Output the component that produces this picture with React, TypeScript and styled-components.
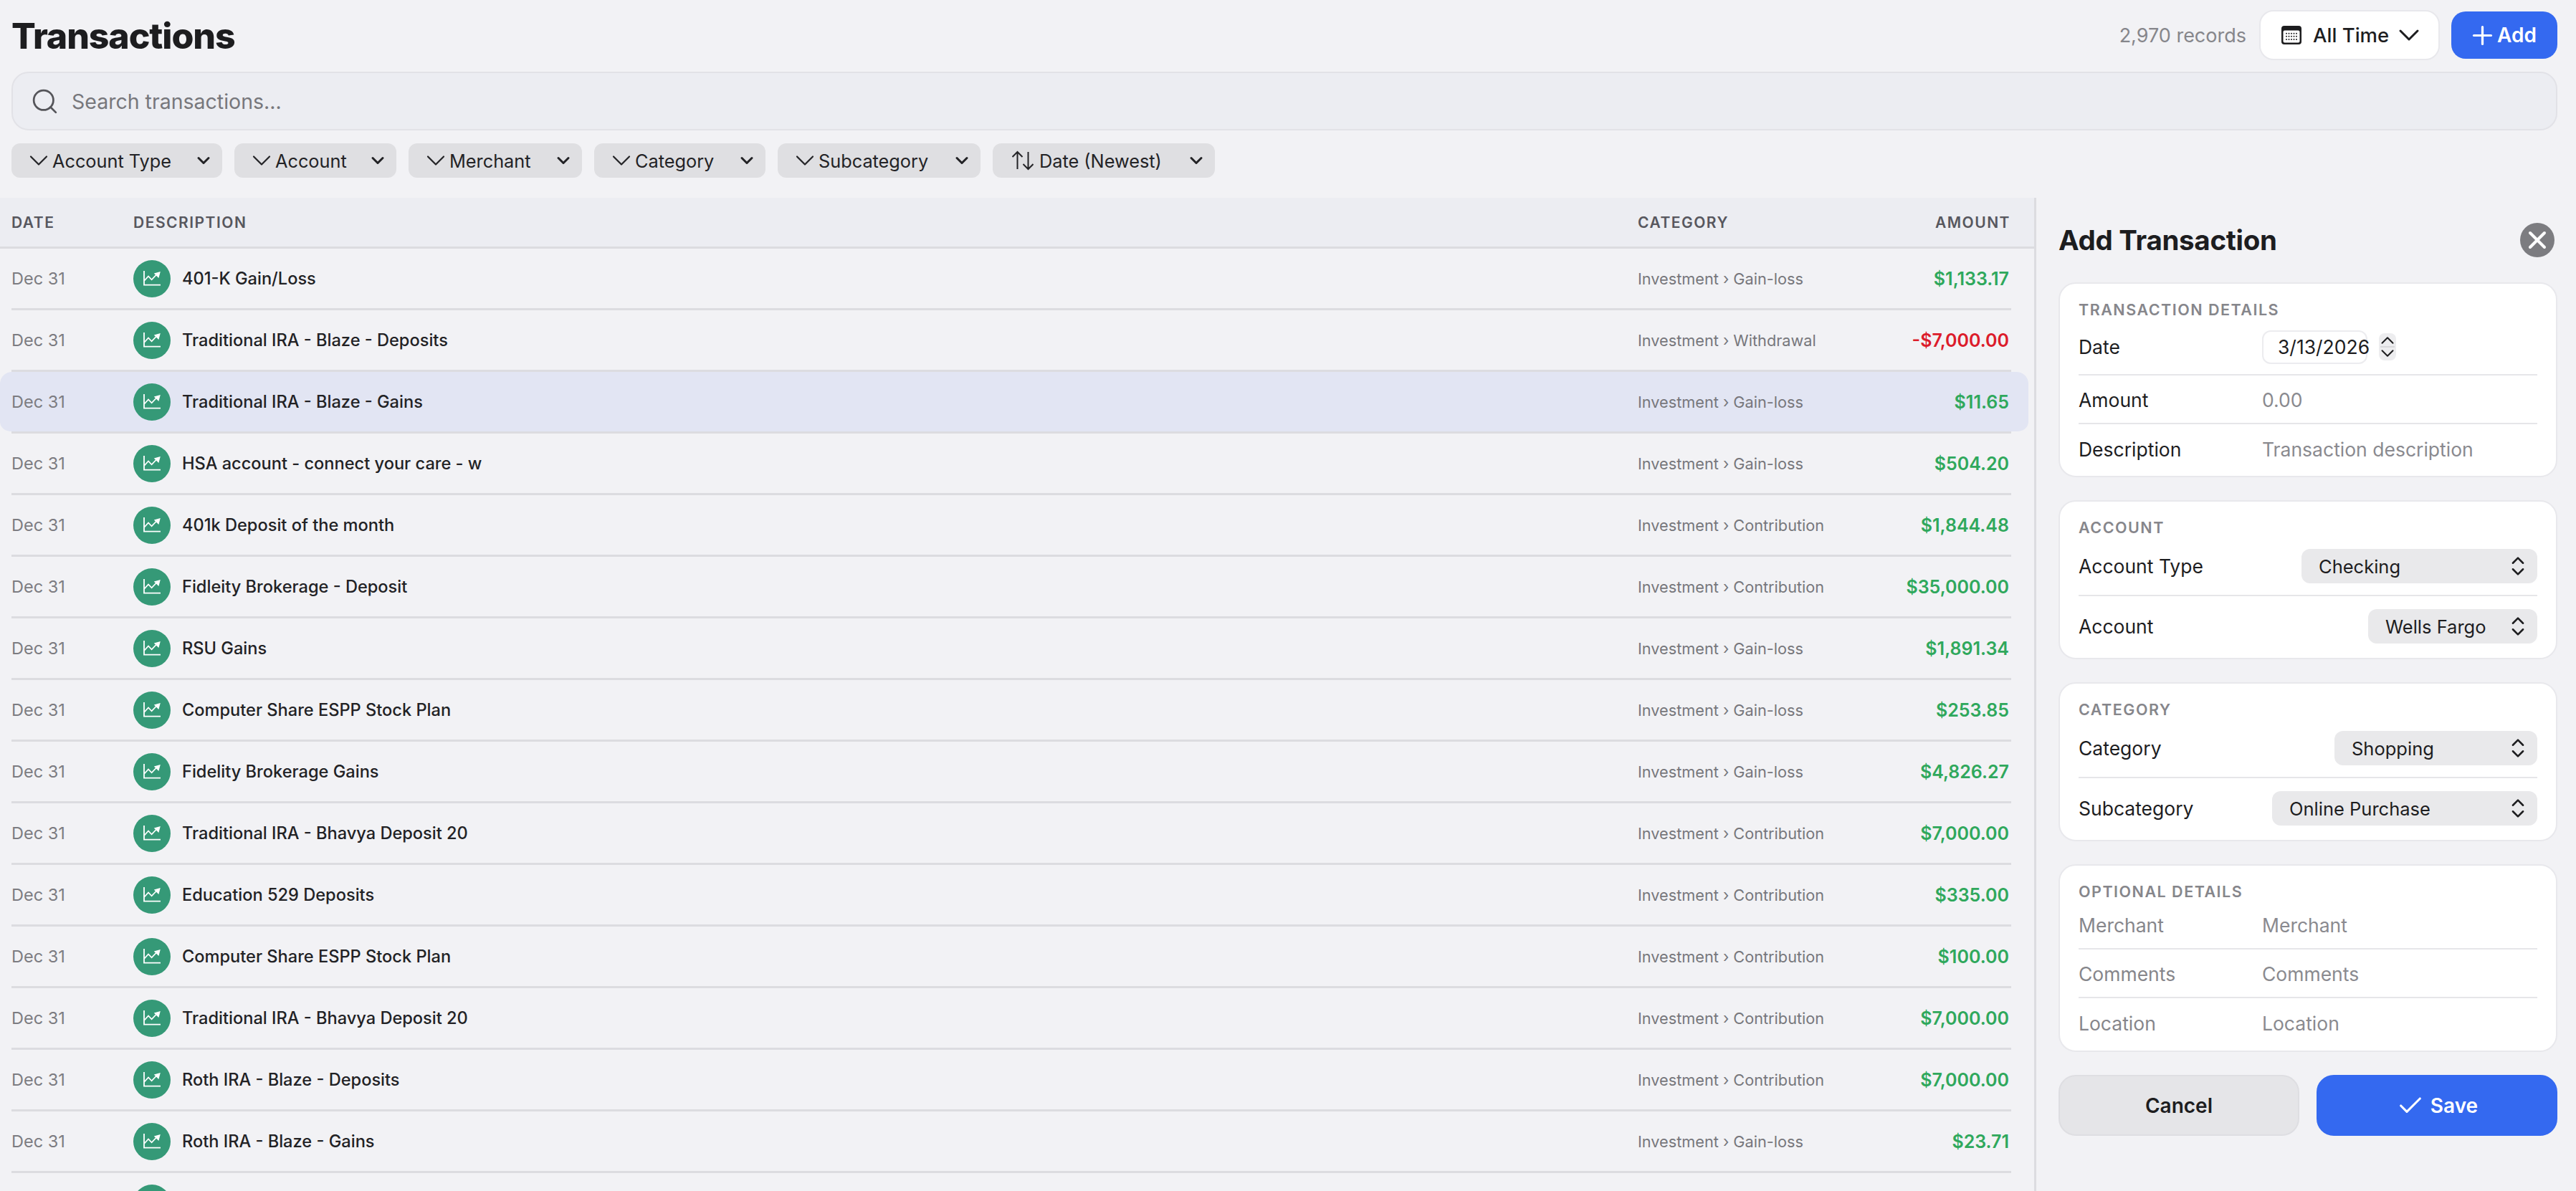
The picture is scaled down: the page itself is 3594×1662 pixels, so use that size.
import styled, { createGlobalStyle } from "styled-components";
import { ChevronDown, ChevronUp, ChevronsUpDown, Plus, Search, X, Check } from "lucide-react";

const GlobalStyle = createGlobalStyle`
    html, body {
        margin: 0;
        padding: 0;
        background: #f2f2f5;
        font-family: Inter, "Liberation Sans", sans-serif;
        color: #1d1d1f;
    }
    * {
        box-sizing: border-box;
    }
`

const Page = styled.div`
    height: 1662px;
    display: flex;
    flex-direction: column;
    overflow: hidden;
`
const TopBar = styled.div`
    height: 100px;
    padding: 14px 26px 0 16px;
    display: flex;
    justify-content: space-between;
    align-items: flex-start;
`
const Title = styled.h1`
    margin: 6px 0 0;
    font-size: 50px;
    line-height: 60px;
    font-weight: 800;
    letter-spacing: -1.1px;
`
const TopActions = styled.div`
    display: flex;
    align-items: center;
    height: 70px;
`
const Records = styled.span`
    font-size: 27px;
    color: #86868b;
    margin-right: 18px;
`
const RangeButton = styled.div`
    width: 252px;
    height: 70px;
    background: #fff;
    border: 2px solid #e8e8ec;
    border-radius: 20px;
    display: flex;
    align-items: center;
    padding-left: 29px;
    font-size: 27.5px;
    font-weight: 500;
    margin-right: 16px;
`
const RangeLabel = styled.span`
    margin: 0 4px 0 16px;
`
const AddButton = styled.div`
    width: 148px;
    height: 66px;
    background: #3469f0;
    color: #fff;
    border-radius: 20px;
    display: flex;
    align-items: center;
    padding-left: 23px;
    font-size: 28px;
    font-weight: 600;
`
const SearchWrap = styled.div`
    margin: 0 26px 0 16px;
    height: 82px;
    background: #ecedf2;
    border: 2px solid #e2e2e7;
    border-radius: 24px;
    display: flex;
    align-items: center;
    padding: 0 24px;
    gap: 17px;
    font-size: 28.5px;
    color: #77777c;
`
const Filters = styled.div`
    display: flex;
    gap: 17px;
    padding: 18px 16px 28px;
    height: 94px;
`
const Filter = styled.div<{ $width: number }>`
    width: ${(p) => p.$width}px;
    height: 48px;
    padding: 0 12px 0 16px;
    background: #dfdfe2;
    border-radius: 12px;
    display: flex;
    align-items: center;
    font-size: 25.3px;
    font-weight: 400;
    color: #232326;
`
const FilterLabel = styled.span`
    flex: 1;
    margin-left: -3px;
    white-space: nowrap;
`
const SortLabel = styled(FilterLabel)`
    margin-left: 8px;
`
const SortGlyph = styled.svg`
    margin-left: 11px;
`
const Body = styled.div`
    flex: 1;
    min-height: 0;
    display: flex;
`
const TablePane = styled.div`
    flex: 1;
    min-width: 0;
`
const HeaderRow = styled.div`
    height: 71px;
    background: #ecedf2;
    border-bottom: 3px solid #dcdce0;
    display: grid;
    grid-template-columns: 170px 1fr 308px 212px;
    align-items: center;
    padding: 0 33px 0 16px;
    font-size: 21px;
    font-weight: 600;
    letter-spacing: 1.5px;
    color: #57575e;
`
const RightCell = styled.div`
    text-align: right;
`
const Row = styled.div<{ $selected?: boolean }>`
    position: relative;
    height: 86px;
    margin-right: 8px;
    padding: 0 27px 0 16px;
    display: grid;
    grid-template-columns: 170px 1fr 306px 212px;
    align-items: center;
    border-bottom: 3px solid transparent;
    background-clip: padding-box;
    background-color: ${(p) => (p.$selected ? "#e2e5f3" : "transparent")};
    border-radius: ${(p) => (p.$selected ? "16px" : "0")};
    &::after {
        content: "";
        position: absolute;
        left: 16px;
        right: 24px;
        bottom: -3px;
        height: 3px;
        background: #dcdce0;
    }
`
const DateCell = styled.div`
    font-size: 23.5px;
    color: #7c7c81;
`
const DescCell = styled.div`
    display: flex;
    align-items: center;
    gap: 16px;
    font-size: 23.6px;
    font-weight: 500;
    color: #222225;
`
const IconCircle = styled.div`
    width: 52px;
    height: 52px;
    border-radius: 50%;
    background: #359977;
    display: flex;
    align-items: center;
    justify-content: center;
`
const CatCell = styled.div`
    font-size: 21.7px;
    color: #77777c;
`
const AmountCell = styled(RightCell)<{ $negative?: boolean }>`
    font-size: 25px;
    font-weight: 600;
    color: ${(p) => (p.$negative ? "#dc1c2b" : "#2fa85c")};
`
const Sidebar = styled.div`
    width: 756px;
    border-left: 3px solid #dcdce0;
    padding: 0 26px 0 31px;
    display: flex;
    flex-direction: column;
`
const SideHead = styled.div`
    height: 118px;
    display: flex;
    align-items: center;
    justify-content: space-between;
    padding-right: 4px;
`
const SideTitle = styled.h2`
    margin: 0;
    font-size: 38.5px;
    font-weight: 700;
    letter-spacing: -0.3px;
`
const CloseButton = styled.div`
    width: 48px;
    height: 48px;
    border-radius: 50%;
    background: #7c7c80;
    display: flex;
    align-items: center;
    justify-content: center;
`
const Card = styled.div<{ $height: number }>`
    height: ${(p) => p.$height}px;
    margin-bottom: 32px;
    background: #fff;
    border: 2px solid #e8e8ec;
    border-radius: 24px;
    padding: 24px 26px 0;
`
const SectionLabel = styled.div`
    font-size: 21.5px;
    line-height: 24px;
    font-weight: 600;
    letter-spacing: 1.5px;
    color: #86868b;
`
const FieldRow = styled.div<{ $height: number; $last?: boolean }>`
    height: ${(p) => p.$height}px;
    padding-top: 2px;
    display: flex;
    align-items: center;
    border-bottom: ${(p) => (p.$last ? "none" : "2px solid #e6e6e9")};
    font-size: 26.5px;
`
const FieldLabel = styled.div<{ $muted?: boolean }>`
    width: 256px;
    color: ${(p) => (p.$muted ? "#86868b" : "#1d1d1f")};
`
const FieldValue = styled.div`
    color: #8a8a8f;
`
const DateBox = styled.div`
    width: 147px;
    height: 47px;
    background: #fff;
    border: 2px solid #ececef;
    border-radius: 12px;
    padding-left: 20px;
    display: flex;
    align-items: center;
    white-space: nowrap;
`
const Stepper = styled.div`
    position: relative;
    width: 24px;
    height: 38px;
    margin-left: 16px;
    background: #ededef;
    border-radius: 8px;
    display: flex;
    flex-direction: column;
    align-items: center;
    justify-content: space-between;
    padding: 1px 0;
    &::after {
        content: "";
        position: absolute;
        left: 2px;
        right: 2px;
        top: 18px;
        height: 2px;
        background: #d9d9dc;
    }
`
const StepUp = styled(ChevronUp)`
    margin: -6px -4px -6px;
    flex: none;
`
const StepDown = styled(ChevronDown)`
    margin: -6px -4px -6px;
    flex: none;
`
const SelectBox = styled.div<{ $width: number }>`
    width: ${(p) => p.$width}px;
    height: 48px;
    margin-left: auto;
    background: #e9e9eb;
    border-radius: 12px;
    display: flex;
    align-items: center;
    justify-content: space-between;
    padding: 0 10px 0 24px;
    font-size: 25.5px;
`
const Actions = styled.div`
    display: flex;
    gap: 24px;
`
const ActionButton = styled.div<{ $primary?: boolean }>`
    flex: 1;
    height: 85px;
    border-radius: 24px;
    display: flex;
    align-items: center;
    justify-content: center;
    gap: 8px;
    font-size: 28px;
    font-weight: 600;
    background: ${(p) => (p.$primary ? "#3469f0" : "#e5e5e8")};
    color: ${(p) => (p.$primary ? "#fff" : "#1d1d1f")};
    border: 2px solid ${(p) => (p.$primary ? "#3469f0" : "#dedee2")};
`

const rows = [
    ["401-K Gain/Loss", "Gain-loss", "$1,133.17"],
    ["Traditional IRA - Blaze - Deposits", "Withdrawal", "-$7,000.00"],
    ["Traditional IRA - Blaze - Gains", "Gain-loss", "$11.65"],
    ["HSA account - connect your care - w", "Gain-loss", "$504.20"],
    ["401k Deposit of the month", "Contribution", "$1,844.48"],
    ["Fidleity Brokerage - Deposit", "Contribution", "$35,000.00"],
    ["RSU Gains", "Gain-loss", "$1,891.34"],
    ["Computer Share ESPP Stock Plan", "Gain-loss", "$253.85"],
    ["Fidelity Brokerage Gains", "Gain-loss", "$4,826.27"],
    ["Traditional IRA - Bhavya Deposit 20", "Contribution", "$7,000.00"],
    ["Education 529 Deposits", "Contribution", "$335.00"],
    ["Computer Share ESPP Stock Plan", "Contribution", "$100.00"],
    ["Traditional IRA - Bhavya Deposit 20", "Contribution", "$7,000.00"],
    ["Roth IRA - Blaze - Deposits", "Contribution", "$7,000.00"],
    ["Roth IRA - Blaze - Gains", "Gain-loss", "$23.71"],
];

const filters: [string, number][] = [
    ["Account Type", 294],
    ["Account", 226],
    ["Merchant", 242],
    ["Category", 239],
    ["Subcategory", 283],
];

function ChartIcon() {
    return (
        <svg width="24" height="21" viewBox="0 0 24 21" fill="none" stroke="#fff" strokeWidth="1.8">
            <path d="M1 0v19.6h23" />
            <path d="M1.5 13.5 7 7.5l4.6 4.8 7.4-7.8" />
            <path d="M14.8 3.4 23.8 1l-2.4 9z" fill="#fff" stroke="none" />
        </svg>
    );
}

function CalendarIcon() {
    return (
        <svg width="28" height="26" viewBox="0 0 28 26">
            <rect width="28" height="26" rx="4" fill="#1d1d1f" />
            <rect x="2.5" y="6.5" width="23" height="17" rx="2" fill="#fff" />
            {[10.7, 14.7, 19].map((y) =>
                [7, 10.5, 14, 17.5, 21].map((x) => (
                    <circle key={x + "-" + y} cx={x} cy={y} r="1" fill="#1d1d1f" />
                ))
            )}
        </svg>
    );
}

function SortIcon() {
    return (
        <SortGlyph width="30" height="30" viewBox="0 0 30 30" fill="none" stroke="#232326" strokeWidth="2">
            <path d="M7.5 27V3M0.5 10l7-7 7 7" />
            <path d="M22.5 3v24M15.5 20l7 7 7-7" />
        </SortGlyph>
    );
}

export default function App() {
    return (
        <Page>
            <GlobalStyle />
            <TopBar>
                <Title>Transactions</Title>
                <TopActions>
                    <Records>2,970 records</Records>
                    <RangeButton>
                        <CalendarIcon />
                        <RangeLabel>All Time</RangeLabel>
                        <ChevronDown size={48} strokeWidth={1.5} />
                    </RangeButton>
                    <AddButton>
                        <Plus size={41} strokeWidth={1.9} />
                        Add
                    </AddButton>
                </TopActions>
            </TopBar>
            <SearchWrap>
                <Search size={41} strokeWidth={1.6} color="#55555a" />
                Search transactions...
            </SearchWrap>
            <Filters>
                {filters.map(([f, w]) => (
                    <Filter key={f} $width={w}>
                        <ChevronDown size={44} strokeWidth={1.2} />
                        <FilterLabel>{f}</FilterLabel>
                        <ChevronDown size={28} strokeWidth={2.6} />
                    </Filter>
                ))}
                <Filter $width={310}>
                    <SortIcon />
                    <SortLabel>Date (Newest)</SortLabel>
                    <ChevronDown size={28} strokeWidth={2.6} />
                </Filter>
            </Filters>
            <Body>
                <TablePane>
                    <HeaderRow>
                        <div>DATE</div>
                        <div>DESCRIPTION</div>
                        <div>CATEGORY</div>
                        <RightCell>AMOUNT</RightCell>
                    </HeaderRow>
                    {rows.map((r, i) => (
                        <Row key={i} $selected={i === 2}>
                            <DateCell>Dec 31</DateCell>
                            <DescCell>
                                <IconCircle>
                                    <ChartIcon />
                                </IconCircle>
                                {r[0]}
                            </DescCell>
                            <CatCell>Investment › {r[1]}</CatCell>
                            <AmountCell $negative={r[2].startsWith("-")}>{r[2]}</AmountCell>
                        </Row>
                    ))}
                    <Row>
                        <div />
                        <DescCell>
                            <IconCircle>
                                <ChartIcon />
                            </IconCircle>
                        </DescCell>
                    </Row>
                </TablePane>
                <Sidebar>
                    <SideHead>
                        <SideTitle>Add Transaction</SideTitle>
                        <CloseButton>
                            <X size={40} strokeWidth={2.4} color="#fff" />
                        </CloseButton>
                    </SideHead>
                    <Card $height={272}>
                        <SectionLabel>TRANSACTION DETAILS</SectionLabel>
                        <FieldRow $height={80}>
                            <FieldLabel>Date</FieldLabel>
                            <DateBox>3/13/2026</DateBox>
                            <Stepper>
                                <StepUp size={30} strokeWidth={1.6} />
                                <StepDown size={30} strokeWidth={1.6} />
                            </Stepper>
                        </FieldRow>
                        <FieldRow $height={68}>
                            <FieldLabel>Amount</FieldLabel>
                            <FieldValue>0.00</FieldValue>
                        </FieldRow>
                        <FieldRow $height={68} $last>
                            <FieldLabel>Description</FieldLabel>
                            <FieldValue>Transaction description</FieldValue>
                        </FieldRow>
                    </Card>
                    <Card $height={222}>
                        <SectionLabel>ACCOUNT</SectionLabel>
                        <FieldRow $height={84}>
                            <FieldLabel>Account Type</FieldLabel>
                            <SelectBox $width={329}>
                                Checking
                                <ChevronsUpDown size={34} strokeWidth={1.8} />
                            </SelectBox>
                        </FieldRow>
                        <FieldRow $height={82} $last>
                            <FieldLabel>Account</FieldLabel>
                            <SelectBox $width={236}>
                                Wells Fargo
                                <ChevronsUpDown size={34} strokeWidth={1.8} />
                            </SelectBox>
                        </FieldRow>
                    </Card>
                    <Card $height={222}>
                        <SectionLabel>CATEGORY</SectionLabel>
                        <FieldRow $height={84}>
                            <FieldLabel>Category</FieldLabel>
                            <SelectBox $width={283}>
                                Shopping
                                <ChevronsUpDown size={34} strokeWidth={1.8} />
                            </SelectBox>
                        </FieldRow>
                        <FieldRow $height={82} $last>
                            <FieldLabel>Subcategory</FieldLabel>
                            <SelectBox $width={370}>
                                Online Purchase
                                <ChevronsUpDown size={34} strokeWidth={1.8} />
                            </SelectBox>
                        </FieldRow>
                    </Card>
                    <Card $height={262}>
                        <SectionLabel>OPTIONAL DETAILS</SectionLabel>
                        <FieldRow $height={69}>
                            <FieldLabel $muted>Merchant</FieldLabel>
                            <FieldValue>Merchant</FieldValue>
                        </FieldRow>
                        <FieldRow $height={68}>
                            <FieldLabel $muted>Comments</FieldLabel>
                            <FieldValue>Comments</FieldValue>
                        </FieldRow>
                        <FieldRow $height={68} $last>
                            <FieldLabel $muted>Location</FieldLabel>
                            <FieldValue>Location</FieldValue>
                        </FieldRow>
                    </Card>
                    <Actions>
                        <ActionButton>Cancel</ActionButton>
                        <ActionButton $primary>
                            <Check size={40} strokeWidth={1.9} />
                            Save
                        </ActionButton>
                    </Actions>
                </Sidebar>
            </Body>
        </Page>
    );
}
